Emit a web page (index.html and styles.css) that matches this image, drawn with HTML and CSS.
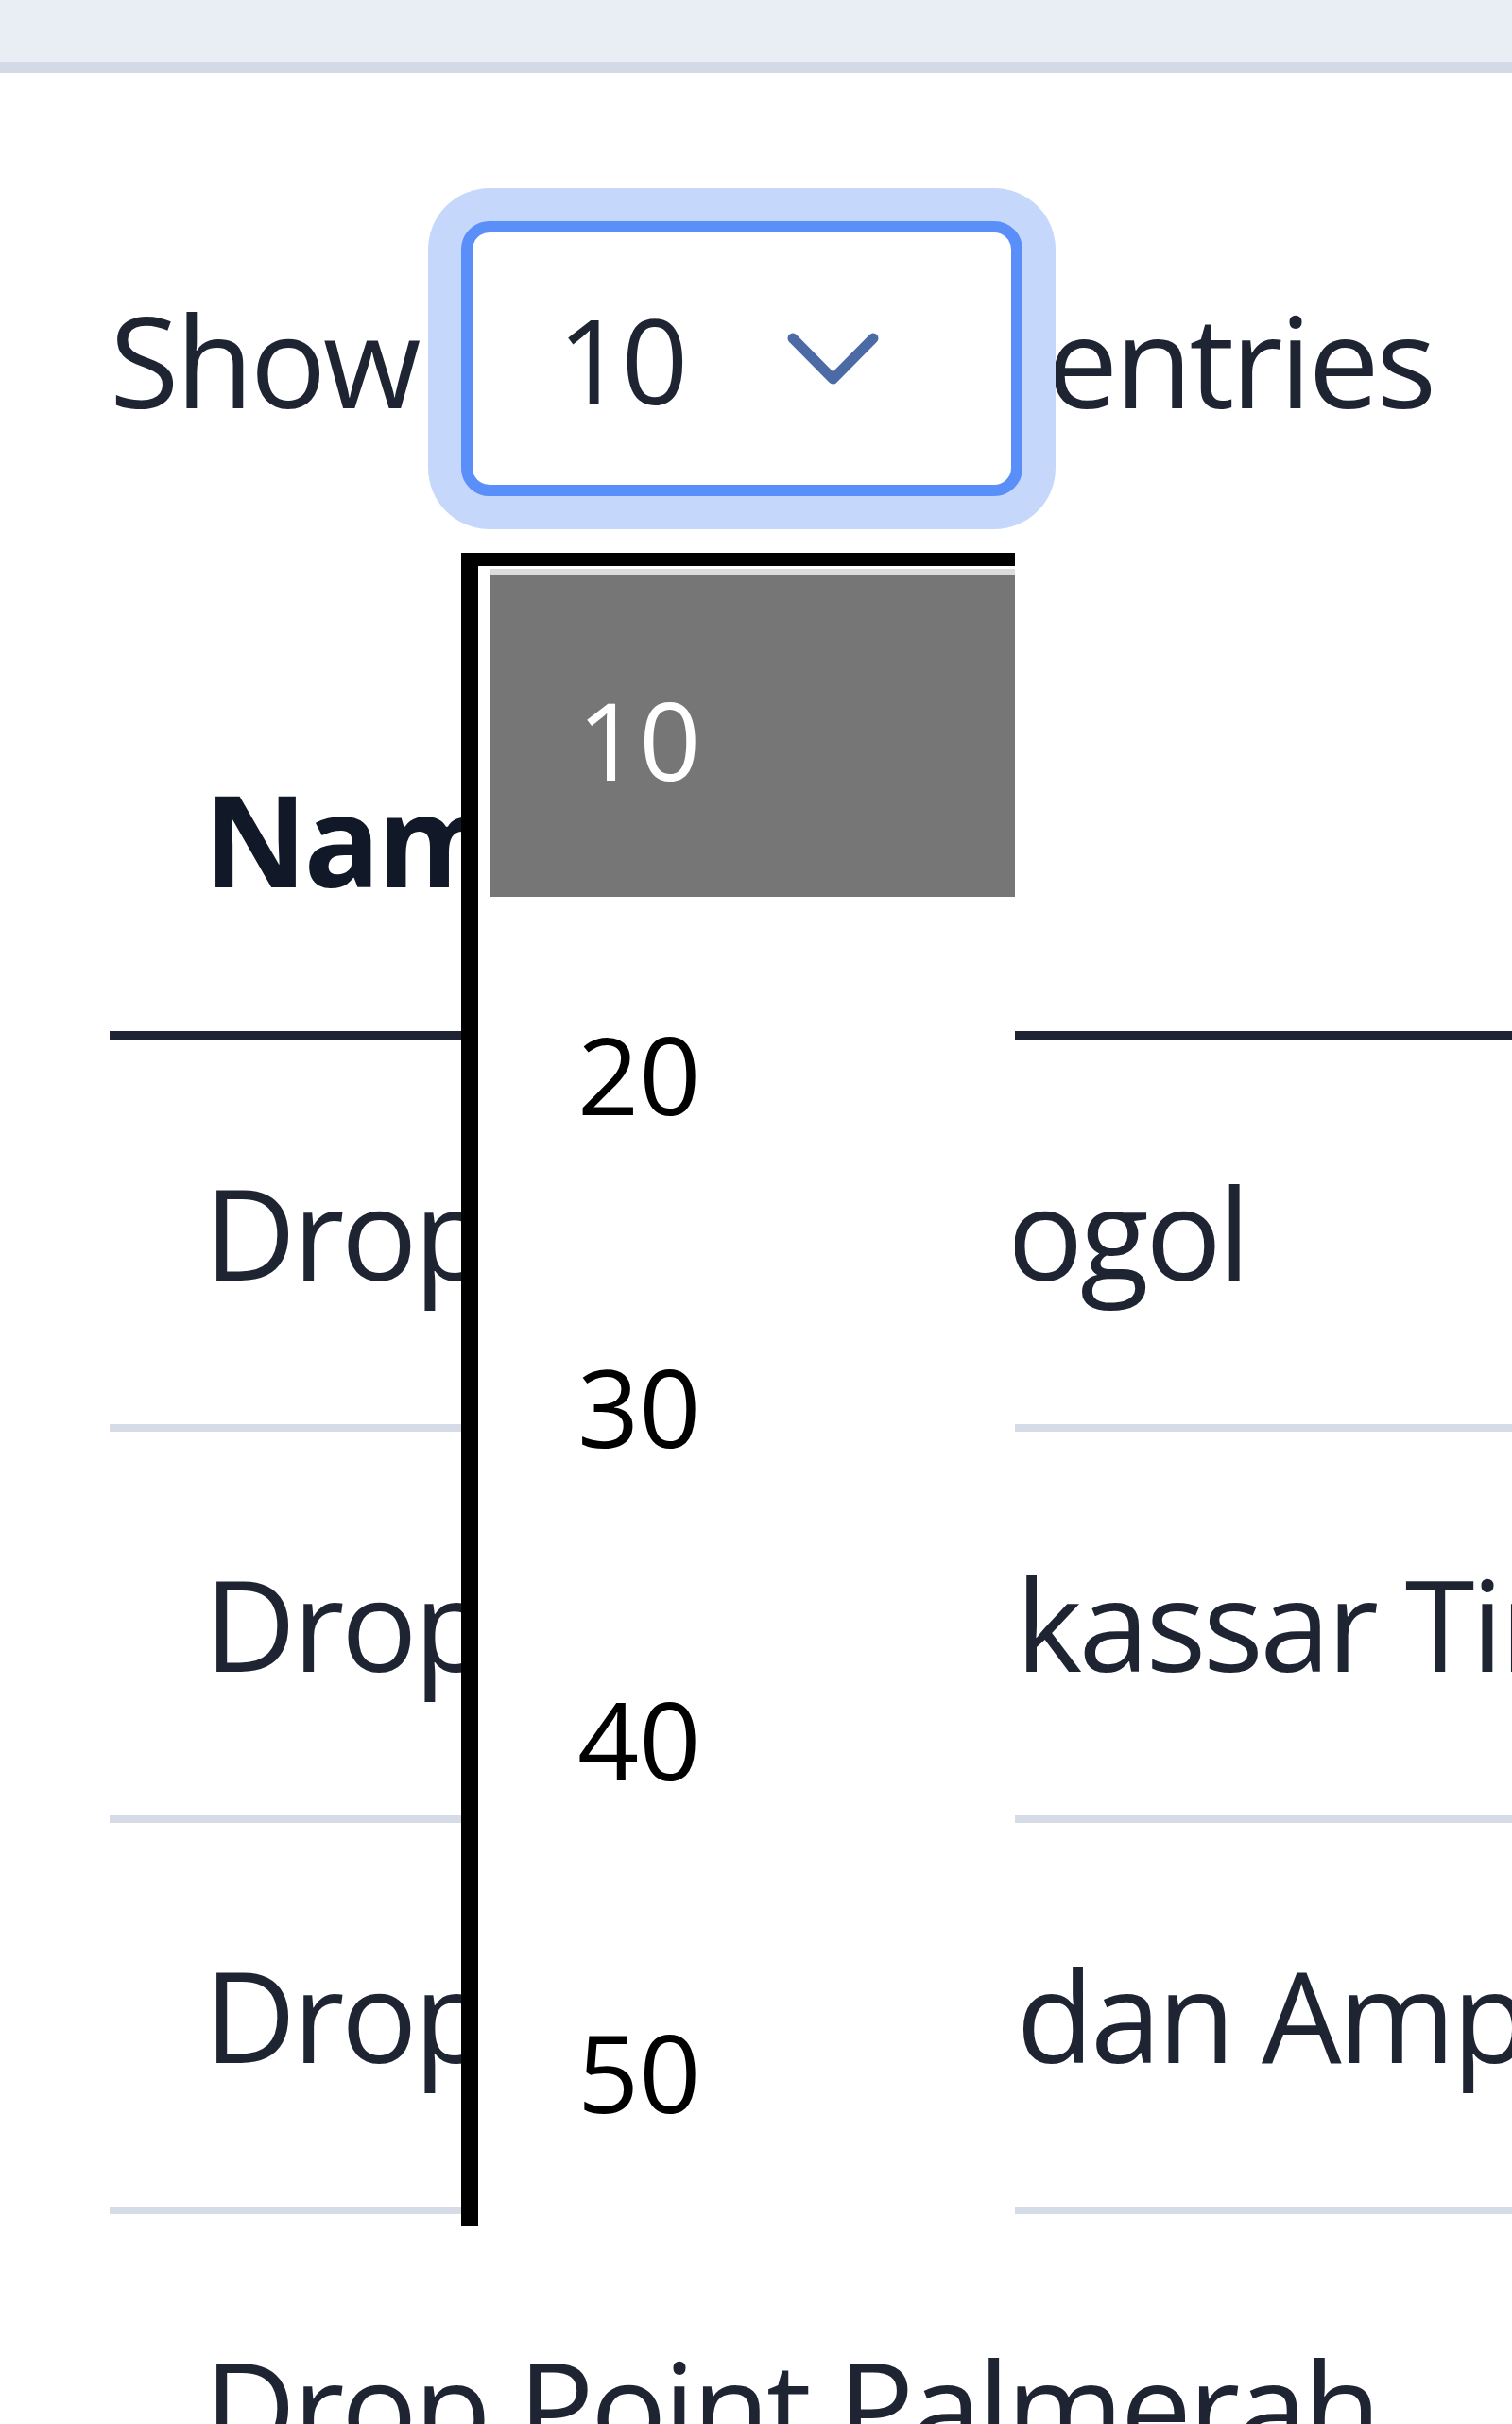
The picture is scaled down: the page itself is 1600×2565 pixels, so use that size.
FILE: index.html
```html
<!DOCTYPE html>
<html lang="id">
<head>
    <meta charset="UTF-8">
    <meta name="viewport" content="width=device-width, initial-scale=1.0">
    <title>Drop Point</title>
    <link rel="stylesheet" href="styles.css">
</head>
<body>
    <!-- header strip at the top of the card -->
    <div class="topbar"></div>

    <div class="content">
        <!-- "Show N entries" control, opened -->
        <div class="length">
            <span class="label">Show</span>
            <div class="select-wrap">
                <div class="select">
                    <span class="select-value">10</span>
                    <svg class="chevron" width="97" height="55" viewBox="0 0 97 55">
                        <polyline points="6,6 48.5,49 91,6" fill="none" stroke="#4b6aa6" stroke-width="11" stroke-linecap="round" stroke-linejoin="round"/>
                    </svg>
                </div>
                <!-- native option list -->
                <div class="options">
                    <div class="option selected">10</div>
                    <div class="option">20</div>
                    <div class="option">30</div>
                    <div class="option">40</div>
                    <div class="option">50</div>
                </div>
            </div>
            <span class="label">entries</span>
        </div>

        <!-- data table -->
        <table class="table">
            <thead>
                <tr>
                    <th>Nama</th>
                    <th>Alamat</th>
                </tr>
            </thead>
            <tbody>
                <tr><td>Drop Point Tibogol</td><td></td></tr>
                <tr><td>Drop Point Makassar Timur</td><td></td></tr>
                <tr><td>Drop Point Medan Amplas</td><td></td></tr>
                <tr><td>Drop Point Palmerah</td><td></td></tr>
            </tbody>
        </table>
    </div>
</body>
</html>
```

FILE: styles.css
```css
/* page base */
body {
    margin: 0;
    background-color: #ffffff;
    font-family: "Open Sans", "Noto Sans", sans-serif;
    font-size: 134px;
    letter-spacing: -3.5px;
    color: #1f2433;
    overflow: hidden;
}

/* grey strip at the top */
.topbar {
    height: 66px;
    background-color: #e9edf4;
    border-bottom: 11px solid #d3dae6;
}

.content {
    padding: 157px 0 0 116px;
}

/* Show [10] entries */
.length {
    display: flex;
    align-items: center;
    margin-bottom: 160px;
}

.select-wrap {
    position: relative;
    margin: 0 26px 0 46px;
}

.select {
    display: flex;
    align-items: center;
    box-sizing: border-box;
    width: 594px;
    height: 291px;
    padding: 0 140px 0 90px;
    background-color: #ffffff;
    border: 12px solid #5a8ef8;
    border-radius: 30px;
    box-shadow: 0 0 0 35px #c5d8fc;
}

.select-value {
    font-size: 124px;
}

.chevron {
    margin-left: auto;
}

/* opened option list */
.options {
    position: absolute;
    top: 351px;
    left: 0;
    box-sizing: border-box;
    width: 586px;
    height: 1771px;
    padding: 9px 0 0 13px;
    background-color: #ffffff;
    border-top: 14px solid #000000;
    border-left: 18px solid #000000;
    overflow: hidden;
    font-size: 114px;
    letter-spacing: 0;
}

.option {
    height: 352px;
    line-height: 352px;
    padding-left: 92px;
    color: #000000;
}

.option.selected {
    height: 341px;
    line-height: 348px;
    margin-bottom: 11px;
    background-color: #767676;
    color: #ffffff;
    box-shadow: 0 -6px 0 #dcdcdc;
}

/* table */
.table {
    border-collapse: collapse;
    white-space: nowrap;
}

.table th,
.table td {
    padding: 102px 100px 103px;
    line-height: 201px;
    text-align: left;
}

.table th {
    font-weight: 700;
    color: #111827;
    border-bottom: 10px solid #1e2433;
}

.table td {
    border-bottom: 8px solid #d5dce8;
}
```
